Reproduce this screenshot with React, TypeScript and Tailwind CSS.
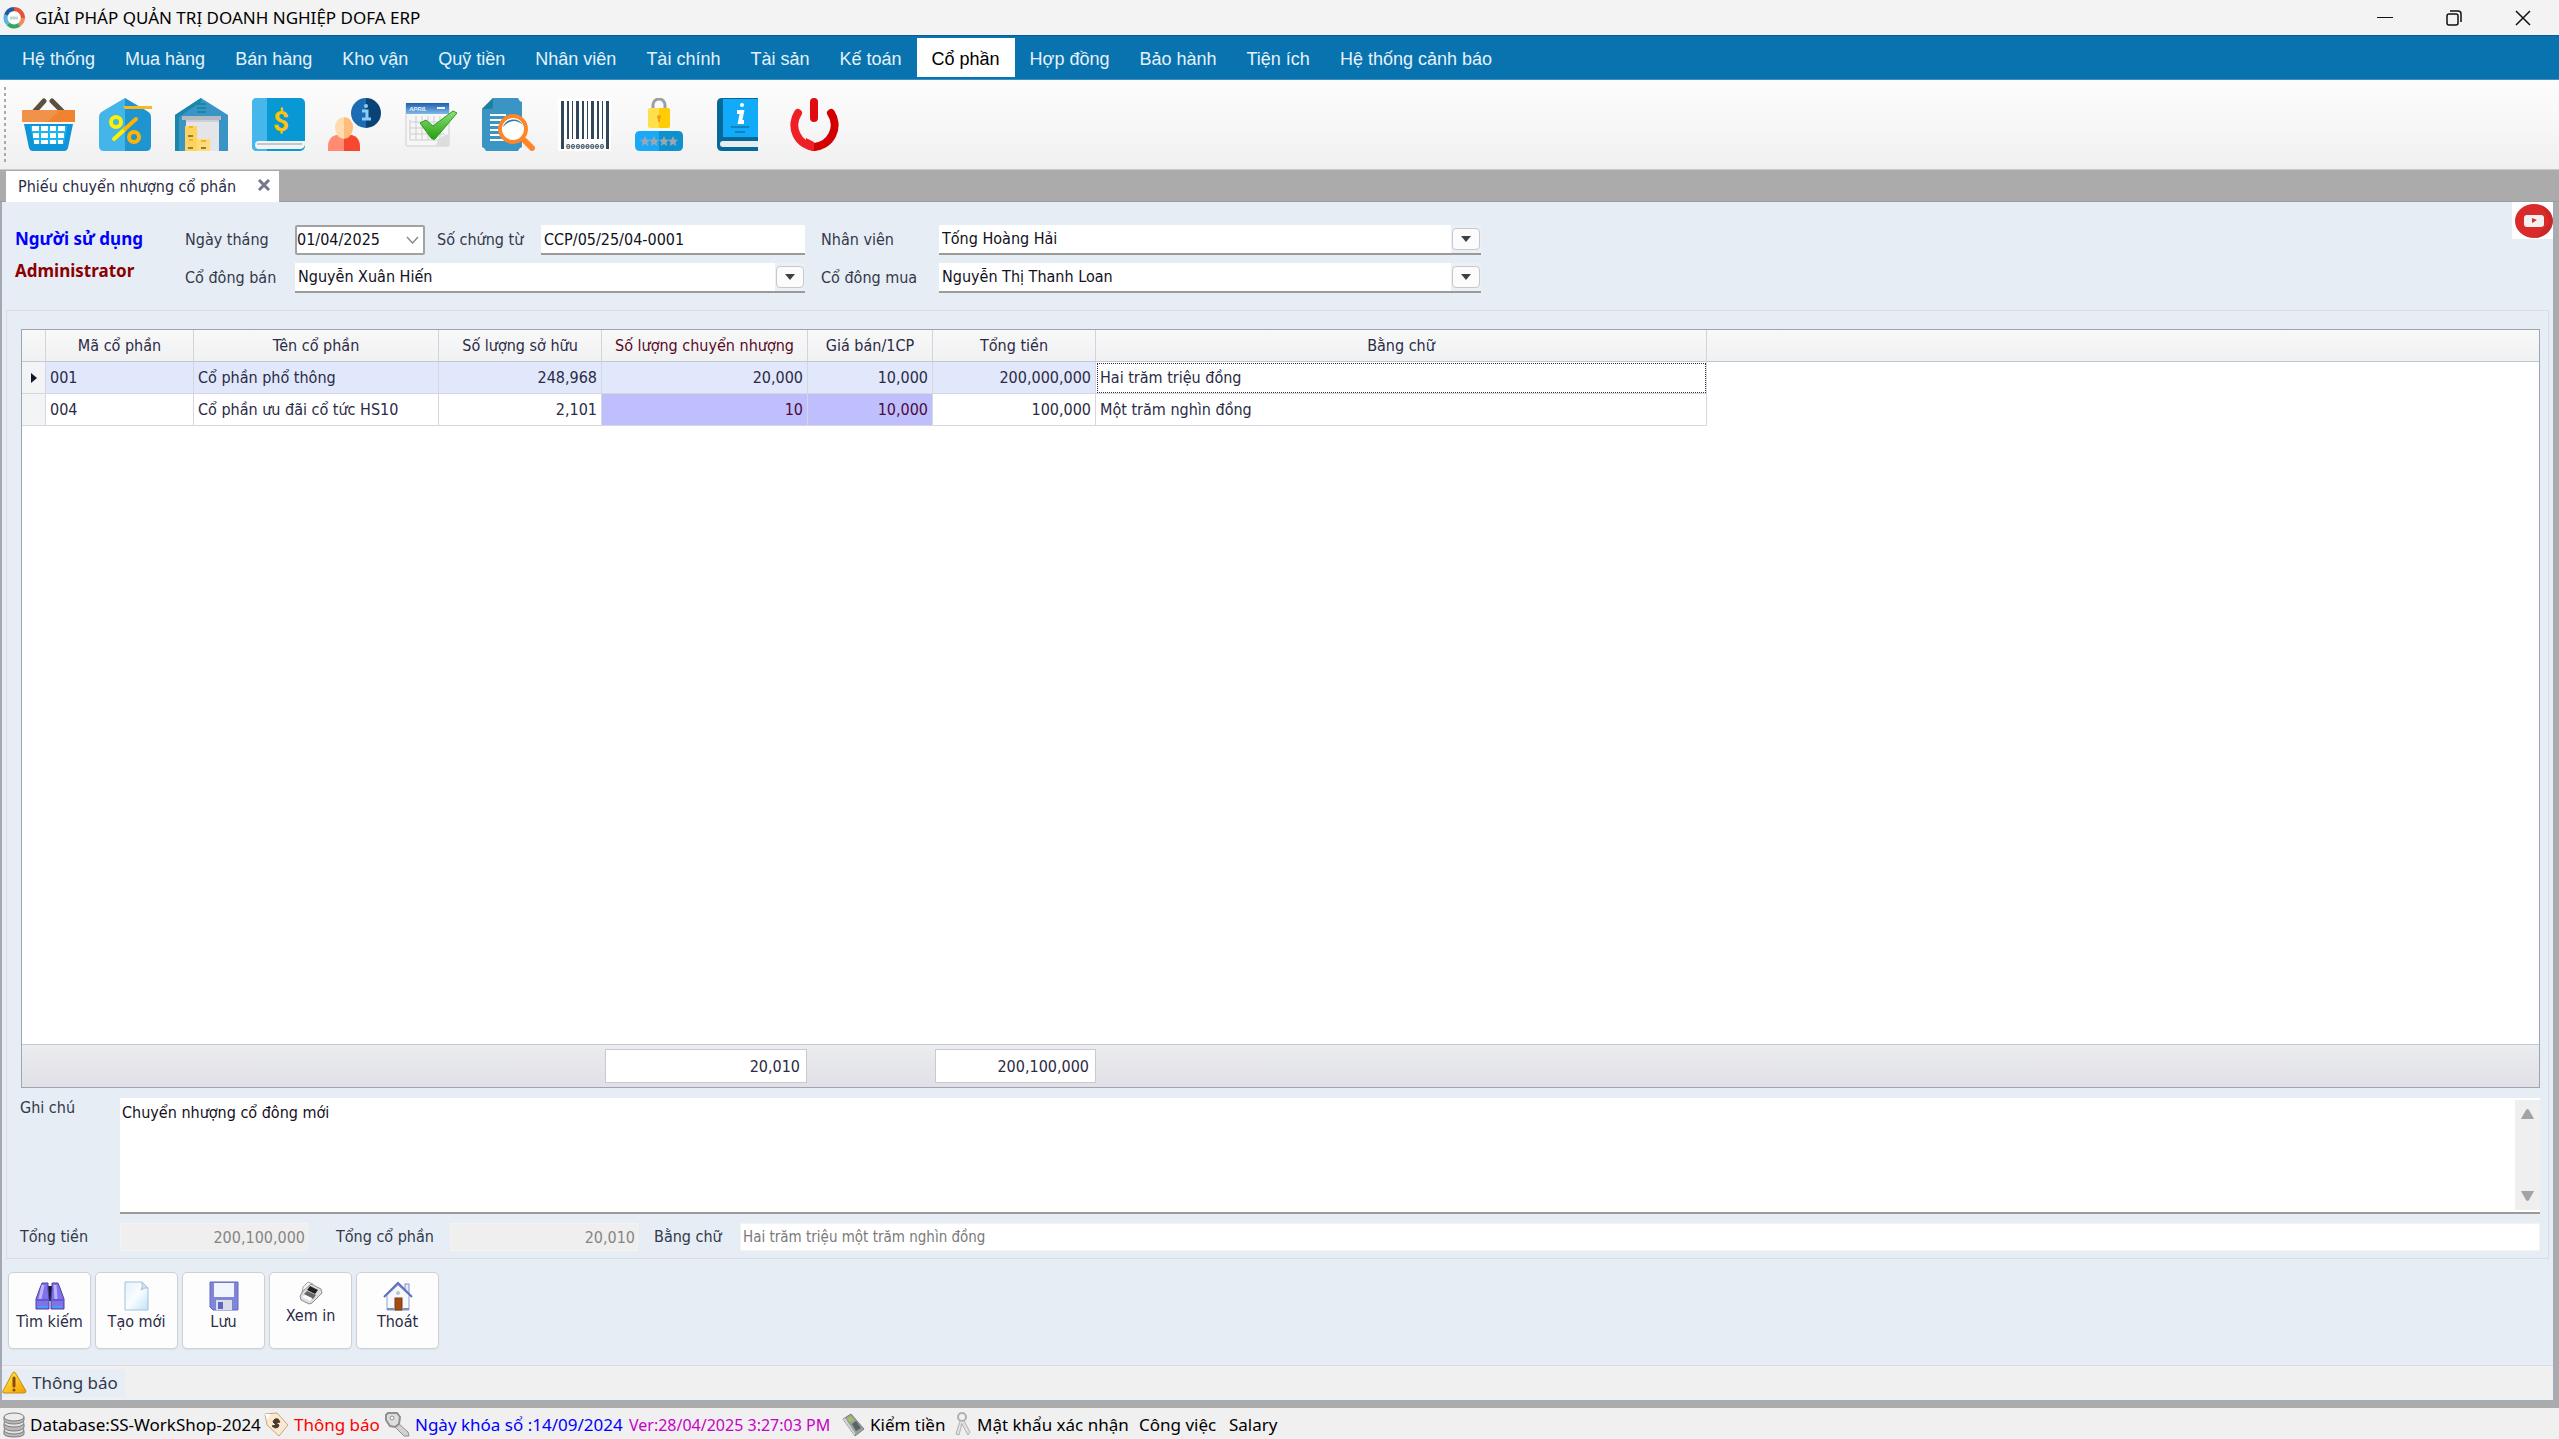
import React, { useState } from 'react';

interface ShareRow {
  code: string;
  name: string;
  owned: string;
  transfer: string;
  price: string;
  total: string;
  words: string;
}

const menuItems = [
  'Hệ thống', 'Mua hàng', 'Bán hàng', 'Kho vận', 'Quỹ tiền', 'Nhân viên', 'Tài chính',
  'Tài sản', 'Kế toán', 'Cổ phần', 'Hợp đồng', 'Bảo hành', 'Tiện ích', 'Hệ thống cảnh báo',
];

const rows: ShareRow[] = [
  {
    code: '001',
    name: 'Cổ phần phổ thông',
    owned: '248,968',
    transfer: '20,000',
    price: '10,000',
    total: '200,000,000',
    words: 'Hai trăm triệu đồng',
  },
  {
    code: '004',
    name: 'Cổ phần ưu đãi cổ tức HS10',
    owned: '2,101',
    transfer: '10',
    price: '10,000',
    total: '100,000',
    words: 'Một trăm nghìn đồng',
  },
];

/* ---------- Toolbar icons ---------- */

function BasketIcon() {
  return (
    <svg viewBox="0 0 53 53" className="h-[53px] w-[53px]">
      <path d="M22 3 L12 14 M30 3 L41 14" stroke="#5d503c" strokeWidth="5" strokeLinecap="round" fill="none" />
      <rect x="0" y="12" width="53" height="12" rx="1" fill="#f1924b" />
      <path d="M53 12 V24 H25 L38 12 Z" fill="#f0832f" />
      <path d="M2 26 H51 L46 50 Q45 53 43 53 H10 Q8 53 7 50 Z" fill="#0f95d7" />
      <path d="M8 28 H45 L42 46 H12 Z" fill="#17b7f5" />
      <g fill="#ffffff">
        <rect x="10" y="28" width="7" height="5" />
        <rect x="19" y="28" width="7" height="5" />
        <rect x="28" y="28" width="6" height="5" />
        <rect x="36" y="28" width="7" height="5" />
        <rect x="11" y="35" width="6" height="5" />
        <rect x="19" y="35" width="7" height="5" />
        <rect x="28" y="35" width="6" height="5" />
        <rect x="36" y="35" width="6" height="5" />
        <rect x="12" y="42" width="5" height="4" />
        <rect x="19" y="42" width="7" height="4" />
        <rect x="28" y="42" width="6" height="4" />
        <rect x="36" y="42" width="5" height="4" />
      </g>
    </svg>
  );
}

function DiscountIcon() {
  return (
    <svg viewBox="0 0 53 53" className="h-[53px] w-[53px]">
      <path d="M26 0 L4 13 Q0 15 0 19 V48 Q0 53 5 53 H26 Z" fill="#44b5e9" />
      <path d="M26 0 L48 13 Q52 15 52 19 V48 Q52 53 47 53 H26 Z" fill="#1e94d1" />
      <path d="M24 8 H53 V11 H26 Z" fill="#f9b91a" />
      <circle cx="17" cy="24" r="5" fill="none" stroke="#fff200" strokeWidth="4" />
      <circle cx="35" cy="39" r="5" fill="none" stroke="#ffb400" strokeWidth="4" />
      <path d="M15 41 L26 31" stroke="#fff200" strokeWidth="4" strokeLinecap="round" />
      <path d="M26 31 L37 21" stroke="#ffb400" strokeWidth="4" strokeLinecap="round" />
    </svg>
  );
}

function WarehouseIcon() {
  return (
    <svg viewBox="0 0 53 53" className="h-[53px] w-[53px]">
      <path d="M26 0 L53 17 V53 H0 V17 Z" fill="#3a95c6" />
      <path d="M0 17 L26 0 V4 L4 19 V53 H0 Z" fill="#1987a9" />
      <path d="M22 6 H31 M22 10 H31 M22 14 H31" stroke="#1987a9" strokeWidth="2" />
      <rect x="11" y="22" width="33" height="31" fill="#e3e5e8" />
      <rect x="7" y="18" width="39" height="4" fill="#b5b9c2" />
      <rect x="11" y="22" width="33" height="2" fill="#cccfd4" />
      <rect x="10" y="28" width="12" height="25" fill="#ffd45c" />
      <rect x="22" y="41" width="13" height="12" fill="#ffdc76" />
      <path d="M13 38 H18 M13 50 H18 M26 50 H31" stroke="#8d7c4f" strokeWidth="2" />
      <path d="M14 29 H18 M14 42 H18 M26 43 H31" stroke="#f2b32c" strokeWidth="2" />
    </svg>
  );
}

function MoneyBookIcon() {
  return (
    <svg viewBox="0 0 53 53" className="h-[53px] w-[53px]">
      <rect width="53" height="53" rx="5" fill="#0898d3" />
      <path d="M15 0 H5 Q0 0 0 5 V48 Q0 53 5 53 H15 Z" fill="#46b7eb" />
      <path d="M7 43 H53 V46 Q53 50 49 51 H7 Q3 51 3 47 Q3 43 7 43 Z" fill="#f2f3f4" />
      <path d="M5 46 H50" stroke="#c3c7cb" strokeWidth="2" />
      <text x="29" y="33" textAnchor="middle" fontFamily="Roboto, sans-serif" fontSize="28" fontWeight="700" fill="#fdc30c">$</text>
    </svg>
  );
}

function UserInfoIcon() {
  return (
    <svg viewBox="0 0 53 53" className="h-[53px] w-[53px]">
      <path d="M16 37 H8 Q0 39 0 49 V53 H16 Z" fill="#ff8c72" />
      <path d="M16 37 H24 Q32 39 32 49 V53 H16 Z" fill="#f5482e" />
      <path d="M16 19 Q7 20 7 30 Q8 40 16 41 Z" fill="#ffdcae" />
      <path d="M16 19 Q25 20 25 30 Q24 40 16 41 Z" fill="#ffbc7c" />
      <path d="M38 0 A15 15 0 0 0 38 30 Z" fill="#1b6cb3" />
      <path d="M38 0 A15 15 0 0 1 38 30 Z" fill="#0a4376" />
      <circle cx="38" cy="8" r="2" fill="#8ccdf7" />
      <path d="M34 13 H39 V21 M34 21 H43" stroke="#8ccdf7" strokeWidth="3" fill="none" />
    </svg>
  );
}

function CalendarCheckIcon() {
  return (
    <svg viewBox="0 0 53 53" className="h-[53px] w-[53px]">
      <defs>
        <linearGradient id="calHead" x1="0" x2="0" y1="0" y2="1">
          <stop offset="0" stopColor="#1f5fae" />
          <stop offset="1" stopColor="#7fb8ea" />
        </linearGradient>
        <linearGradient id="calCheck" x1="0" x2="0" y1="0" y2="1">
          <stop offset="0" stopColor="#8fe07c" />
          <stop offset="1" stopColor="#23a00d" />
        </linearGradient>
      </defs>
      <rect x="1" y="6" width="43" height="42" rx="1" fill="#f6f6f6" stroke="#cfcfcf" />
      <rect x="1" y="5" width="43" height="11" fill="url(#calHead)" />
      <text x="4" y="13" fontFamily="Liberation Sans, sans-serif" fontSize="6" fontWeight="700" fontStyle="italic" fill="#e8f2fc">APRIL</text>
      <path d="M32 10 H40" stroke="#e8f2fc" strokeWidth="2" />
      <path d="M5 24 H40 M5 30 H40 M5 36 H40 M5 42 H40 M5 22 V42 M11 18 V42 M17 18 V42 M23 18 V42 M29 18 V42 M35 18 V42" stroke="#cdcdcd" />
      <path d="M31 48 Q33 38 44 36 V48 Z" fill="#dddddd" />
      <path d="M15 25 L21 22 L28 28 L48 13 L52 15 L30 41 Q28 42 26 40 Z" fill="url(#calCheck)" stroke="#2f9a1c" />
    </svg>
  );
}

function DocSearchIcon() {
  return (
    <svg viewBox="0 0 53 53" className="h-[53px] w-[53px]">
      <path d="M11 0 H36 Q37 3 40 4 V49 Q37 50 36 53 H4 Q3 50 0 49 V11 Z" fill="#3a95c4" />
      <path d="M11 0 V8 Q11 11 8 11 H0 Z" fill="#1c7f9f" />
      <path d="M8 17 H24 M8 22 H20 M8 27 H18 M8 32 H18 M8 37 H20 M8 42 H25" stroke="#ffffff" strokeWidth="2" />
      <path d="M43 43 L50 50" stroke="#ff8628" strokeWidth="6" strokeLinecap="round" />
      <circle cx="31" cy="31" r="13" fill="#ffffff" stroke="#ff8628" strokeWidth="4" />
      <path d="M21 29 A11 11 0 0 1 41 27 Q31 18 21 29" fill="#2f7f9f" />
    </svg>
  );
}

function BarcodeIcon() {
  return (
    <svg viewBox="0 0 53 53" className="h-[53px] w-[53px]">
      <rect width="53" height="53" fill="#ffffff" />
      <g fill="#33475b">
        <rect x="3" y="3" width="3" height="48" />
        <rect x="9" y="3" width="2" height="38" />
        <rect x="14" y="3" width="1" height="38" />
        <rect x="18" y="3" width="3" height="38" />
        <rect x="24" y="3" width="2" height="38" />
        <rect x="29" y="3" width="1" height="38" />
        <rect x="33" y="3" width="3" height="38" />
        <rect x="39" y="3" width="2" height="38" />
        <rect x="44" y="3" width="1" height="38" />
        <rect x="48" y="3" width="3" height="48" />
      </g>
      <text x="27" y="51" textAnchor="middle" fontFamily="Liberation Mono, monospace" fontSize="8" fontWeight="700" fill="#33475b">00000000</text>
    </svg>
  );
}

function PasswordIcon() {
  return (
    <svg viewBox="0 0 53 53" className="h-[53px] w-[53px]">
      <path d="M18 12 V7 A6 6 0 0 1 30 7 V12" fill="none" stroke="#9b9fa3" strokeWidth="3" />
      <path d="M24 10 H15 Q13 10 13 12 V28 Q13 30 15 30 H24 Z" fill="#ffe04b" />
      <path d="M24 10 H33 Q35 10 35 12 V28 Q35 30 33 30 H24 Z" fill="#ffcd05" />
      <circle cx="24" cy="19" r="2" fill="#f59a1c" />
      <path d="M24 19 V24" stroke="#f59a1c" strokeWidth="2" />
      <path d="M24 33 H5 Q0 33 0 38 V48 Q0 53 5 53 H24 Z" fill="#19a9f7" />
      <path d="M24 33 H43 Q48 33 48 38 V48 Q48 53 43 53 H24 Z" fill="#0f91cd" />
      <g fill="#9aa7b3">
        {[10, 19, 29, 38].map((x) => (
          <path key={x} transform={`translate(${x} 43)`} d="M0 -5 L1.5 -1.6 L5 -1.2 L2.4 1.2 L3.2 5 L0 3 L-3.2 5 L-2.4 1.2 L-5 -1.2 L-1.5 -1.6 Z" />
        ))}
      </g>
    </svg>
  );
}

function GuideBookIcon() {
  return (
    <svg viewBox="0 0 53 53" className="h-[53px] w-[53px]">
      <path d="M11 0 H47 V53 H11 Q6 53 6 48 V5 Q6 0 11 0 Z" fill="#05699a" />
      <path d="M12 1 H47 V39 H12 Z" fill="#12abf9" />
      <path d="M12 43 H47 V49 H12 Q9 49 9 46 Q9 43 12 43 Z" fill="#e9ecee" />
      <circle cx="31" cy="7" r="2" fill="#ffffff" />
      <path d="M26 14 H31 L29 24 H33" fill="none" stroke="#ffffff" strokeWidth="4" />
      <path d="M20 29 H38 M24 34 H34" stroke="#1283bd" strokeWidth="2" />
    </svg>
  );
}

function PowerIcon() {
  return (
    <svg viewBox="0 0 53 53" className="h-[53px] w-[53px]">
      <path d="M10 15 A22 22 0 0 0 26 49" fill="none" stroke="#ef1f26" strokeWidth="8" strokeLinecap="round" />
      <path d="M43 15 A22 22 0 0 1 26 49" fill="none" stroke="#d30000" strokeWidth="8" strokeLinecap="round" />
      <path d="M18 40 L26 44 V53 L17 50 Z" fill="#ef1f26" />
      <path d="M26 4 V20" stroke="#e00b10" strokeWidth="8" strokeLinecap="round" />
    </svg>
  );
}

const tools = [
  { label: 'Mua hàng', icon: BasketIcon },
  { label: 'Bán hàng', icon: DiscountIcon },
  { label: 'Kho vận', icon: WarehouseIcon },
  { label: 'Quỹ tiền', icon: MoneyBookIcon },
  { label: 'Nhân viên', icon: UserInfoIcon },
  { label: 'Lịch', icon: CalendarCheckIcon },
  { label: 'Tra cứu', icon: DocSearchIcon },
  { label: 'Mã vạch', icon: BarcodeIcon },
  { label: 'Mật khẩu', icon: PasswordIcon },
  { label: 'Hướng dẫn', icon: GuideBookIcon },
  { label: 'Thoát', icon: PowerIcon },
];

/* ---------- Action button icons ---------- */

function BinocularsIcon() {
  return (
    <svg viewBox="0 0 30 30" className="h-[30px] w-[30px]">
      <rect x="11" y="5" width="8" height="15" fill="#1c1c2c" />
      <path d="M7 2 H13 V8 L14 18 V28 H1 V18 L5 7 Z" fill="#7f72ea" stroke="#4a3fa8" />
      <path d="M17 2 H23 L25 7 L29 18 V28 H16 V18 L17 8 Z" fill="#7f72ea" stroke="#4a3fa8" />
      <path d="M8 4 L5 18 M20 4 L21 18" stroke="#bdb4ff" strokeWidth="3" />
      <path d="M2 19 H13 M17 19 H28" stroke="#4a3fa8" />
      <path d="M3 26 H12 M18 26 H27" stroke="#3fa4ee" strokeWidth="2" />
    </svg>
  );
}

function NewFileIcon() {
  return (
    <svg viewBox="0 0 30 30" className="h-[30px] w-[30px]">
      <defs>
        <linearGradient id="newFile" x1="0" x2="1" y1="0" y2="1">
          <stop offset="0" stopColor="#e3f1fb" />
          <stop offset="0.5" stopColor="#fafdff" />
          <stop offset="1" stopColor="#bfe3f8" />
        </linearGradient>
      </defs>
      <path d="M3 1 H20 L26 7 V29 H3 Z" fill="url(#newFile)" stroke="#a3c0de" />
      <path d="M20 1 Q21 7 19 9 Q23 6 26 7 Z" fill="#cfe2f2" stroke="#a3c0de" />
    </svg>
  );
}

function FloppyIcon() {
  return (
    <svg viewBox="0 0 30 30" className="h-[30px] w-[30px]">
      <path d="M1 1 H29 V29 H4 L1 26 Z" fill="#8085dc" stroke="#6368bd" />
      <rect x="5" y="2" width="20" height="14" fill="#f1f5fd" />
      <rect x="7" y="19" width="16" height="10" fill="#dcdde4" />
      <rect x="9" y="21" width="5" height="7" fill="#5f65c2" />
    </svg>
  );
}

function PrinterIcon() {
  return (
    <svg viewBox="0 0 24 24" className="h-6 w-6">
      <path d="M4 6 L9 1 L14 3 L11 8 L3 12 Z" fill="#f4f4f4" stroke="#a2a2a2" />
      <path d="M1 15 L4 10 L12 3 L22 8 L23 12 L13 22 L10 23 L2 19 Z" fill="#dedede" stroke="#8d8d8d" />
      <path d="M8 9 L11 5 L19 9 L16 13 Z" fill="#222222" />
      <path d="M5 13 L8 10 L17 14 L14 18 Z" fill="#666666" />
      <path d="M3 16 L6 14 L13 17 L11 20 Z" fill="#ffffff" />
    </svg>
  );
}

function HomeIcon() {
  return (
    <svg viewBox="0 0 30 30" className="h-[30px] w-[30px]">
      <rect x="22" y="3" width="4" height="9" fill="#e6ebf7" stroke="#7f90cc" />
      <path d="M4 14 L15 4 L26 14 V29 H4 Z" fill="#f6f8fc" stroke="#92a2c8" />
      <path d="M1 16 L15 2 L29 16" fill="none" stroke="#5b70bc" strokeWidth="2" />
      <circle cx="15" cy="12" r="2" fill="#b9c3d3" />
      <rect x="12" y="17" width="7" height="12" fill="#a24c14" stroke="#7d3a10" />
      <path d="M4 28 H11 M20 28 H26" stroke="#7d8fc0" strokeWidth="2" />
    </svg>
  );
}

const actions = [
  { label: 'Tìm kiếm', icon: BinocularsIcon },
  { label: 'Tạo mới', icon: NewFileIcon },
  { label: 'Lưu', icon: FloppyIcon },
  { label: 'Xem in', icon: PrinterIcon },
  { label: 'Thoát', icon: HomeIcon },
];

/* ---------- Status bar icons ---------- */

function DatabaseIcon() {
  return (
    <svg viewBox="0 0 22 26" className="h-[26px] w-[22px]">
      <g stroke="#7c7c7c">
        <path d="M1 19 V22 A10 3 0 0 0 21 22 V19 Z" fill="#b9b9b9" />
        <ellipse cx="11" cy="18" rx="10" ry="4" fill="#e4e4e4" />
        <path d="M1 12 V15 A10 4 0 0 0 21 15 V12 Z" fill="#b9b9b9" />
        <ellipse cx="11" cy="11" rx="10" ry="4" fill="#e4e4e4" />
        <path d="M1 5 V8 A10 4 0 0 0 21 8 V5 Z" fill="#b9b9b9" />
        <ellipse cx="11" cy="5" rx="10" ry="4" fill="#ececec" />
      </g>
    </svg>
  );
}

function TagIcon() {
  return (
    <svg viewBox="0 0 25 25" className="h-[25px] w-[25px]">
      <path d="M1 2 L13 1 L24 13 L15 24 L3 13 Z" fill="#fbe8d0" stroke="#c9a67c" />
      <path d="M1 2 L7 2 L3 8 Z" fill="#ffffff" />
      <path d="M9 10 Q10 6 14 7 L16 10 L12 11 L15 13 Q15 16 11 16 L8 14 L12 13 Z" fill="#4a3a2c" stroke="#4a3a2c" />
    </svg>
  );
}

function KeyIcon() {
  return (
    <svg viewBox="0 0 25 25" className="h-[25px] w-[25px]">
      <path d="M13 11 L23 20 L24 24 L19 24 L10 15 Z" fill="#d2d2d2" stroke="#8f8f8f" />
      <path d="M3 1 H12 L15 5 L14 12 L10 15 L5 14 L1 8 V3 Z" fill="#dedede" stroke="#8f8f8f" strokeWidth="2" />
      <circle cx="7" cy="6" r="2" fill="#f7f7f7" stroke="#8f8f8f" />
    </svg>
  );
}

function CounterIcon() {
  return (
    <svg viewBox="0 0 23 24" className="h-6 w-[23px]">
      <path d="M1 6 L9 1 L22 16 L13 23 Z" fill="#9a9e9d" stroke="#7c807f" />
      <path d="M1 6 L13 23 L13 20 L3 5 Z" fill="#d5d7d6" />
      <path d="M5 6 L9 3 L12 7 L8 9 Z" fill="#9fc45a" />
      <path d="M10 11 L14 8 L19 15 L14 18 Z" fill="#586468" />
    </svg>
  );
}

function KeysIcon() {
  return (
    <svg viewBox="0 0 18 25" className="h-[25px] w-[18px]">
      <circle cx="8" cy="5" r="4" fill="none" stroke="#b0b0b0" strokeWidth="2" />
      <path d="M6 9 L2 22 L5 23 L8 11 M10 9 L16 20 L14 23 L8 12" fill="#e3e3e3" stroke="#b0b0b0" />
    </svg>
  );
}

function WarningIcon() {
  return (
    <svg viewBox="0 0 25 24" className="h-6 w-[25px]">
      <defs>
        <linearGradient id="warn" x1="0" x2="1" y1="0" y2="1">
          <stop offset="0" stopColor="#fff04a" />
          <stop offset="1" stopColor="#f59b00" />
        </linearGradient>
      </defs>
      <path d="M12 1 Q13 1 14 3 L24 20 Q24 22 22 22 H2 Q0 22 1 20 L10 3 Q11 1 12 1 Z" fill="url(#warn)" stroke="#c98a10" />
      <path d="M12 7 V15" stroke="#8c4a06" strokeWidth="3" strokeLinecap="round" />
      <circle cx="12" cy="19" r="1.5" fill="#8c4a06" />
    </svg>
  );
}

const statusItems = [
  { label: 'Database:SS-WorkShop-2024', icon: DatabaseIcon, className: 'w-[261px] text-[17px] text-black' },
  { label: 'Thông báo', icon: TagIcon, className: 'w-[121px] text-[17px] text-[#ff0000]' },
  { label: 'Ngày khóa sổ :14/09/2024', icon: KeyIcon, className: 'w-[244px] text-[17px] text-[#0000ff]' },
  { label: 'Ver:28/04/2025 3:27:03 PM', icon: null, className: 'w-[213px] text-base text-[#c800c8]' },
  { label: 'Kiểm tiền', icon: CounterIcon, className: 'w-[112px] text-[17px] text-black' },
  { label: 'Mật khẩu xác nhận', icon: KeysIcon, className: 'w-[185px] text-[17px] text-black' },
  { label: 'Công việc', icon: null, className: 'w-[90px] text-[17px] text-black' },
  { label: 'Salary', icon: null, className: 'text-[17px] text-black' },
];

/* ---------- Form parts ---------- */

function LookupField({ id, label, value, labelWidth }: { id: string; label: string; value: string; labelWidth: string }) {
  return (
    <div className="flex items-center">
      <label htmlFor={id} className={`${labelWidth} shrink-0`}>{label}</label>
      <div className="relative flex-1 border-b-2 border-[#9a9a98] bg-white">
        <select id={id} defaultValue={value} className="block h-7 w-full appearance-none bg-white px-[3px] text-[#111122] outline-none">
          <option>{value}</option>
        </select>
        <span className="pointer-events-none absolute inset-y-0 right-0 flex w-[30px] items-center justify-center bg-[#eaf0f5]">
          <span className="flex h-[22px] w-7 items-center justify-center rounded-[4px] border border-[#c8c8cc] bg-[#fbfbfb]">
            <svg viewBox="0 0 10 6" className="h-[6px] w-[10px]"><path d="M0 0 H10 L5 6 Z" fill="#3f3f3f" /></svg>
          </span>
        </span>
      </div>
    </div>
  );
}

function ShareTable() {
  const head = 'border-r border-b border-r-[#d3d4db] border-b-[#c3c5cf] font-normal';
  const cell = 'border-r border-b border-[#d5d6de] px-1';

  return (
    <div className="flex flex-1 flex-col border border-[#9ea4b2] bg-white">
      <div className="bg-linear-to-b from-[#f8f8f8] to-[#f0f1f3] bg-[length:100%_32px] bg-no-repeat">
        <table className="w-full table-fixed border-separate border-spacing-0 text-[#2b2b45]">
          <colgroup>
            <col className="w-[24px]" />
            <col className="w-[148px]" />
            <col className="w-[245px]" />
            <col className="w-[163px]" />
            <col className="w-[206px]" />
            <col className="w-[125px]" />
            <col className="w-[163px]" />
            <col className="w-[611px]" />
            <col />
          </colgroup>
          <thead>
            <tr className="h-8">
              <th className={head} aria-label="Dòng" />
              <th className={head}>Mã cổ phần</th>
              <th className={head}>Tên cổ phần</th>
              <th className={head}>Số lượng sở hữu</th>
              <th className={`${head} text-[#5a0a1e]`}>Số lượng chuyển nhượng</th>
              <th className={head}>Giá bán/1CP</th>
              <th className={head}>Tổng tiền</th>
              <th className={head}>Bằng chữ</th>
              <td className="border-b border-[#c3c5cf]" />
            </tr>
          </thead>
          <tbody>
            {rows.map((row, i) => {
              const active = i === 0;
              const base = active ? 'bg-[#e1e8fc]' : 'bg-white';
              const edit = active ? 'bg-[#e1e8fc]' : 'bg-[#c0bffd] text-[#4a0a3c]';
              return (
                <tr key={row.code} className="h-8">
                  <td className="border-r border-b border-[#d5d6de] bg-[#f3f4f6]">
                    {active && (
                      <svg viewBox="0 0 6 10" className="ml-[9px] h-[10px] w-[6px]"><path d="M0 0 L6 5 L0 10 Z" fill="#15152a" /></svg>
                    )}
                  </td>
                  <td className={`${cell} ${base}`}>{row.code}</td>
                  <td className={`${cell} ${base}`}>{row.name}</td>
                  <td className={`${cell} ${base} text-right`}>{row.owned}</td>
                  <td className={`${cell} ${edit} text-right`}>{row.transfer}</td>
                  <td className={`${cell} ${edit} text-right`}>{row.price}</td>
                  <td className={`${cell} ${base} text-right`}>{row.total}</td>
                  <td className={`${cell} bg-white ${active ? 'outline-1 -outline-offset-2 outline-dotted outline-[#30303c]' : ''}`}>{row.words}</td>
                  <td className="bg-white" />
                </tr>
              );
            })}
          </tbody>
        </table>
      </div>

      <div className="flex-1" />

      {/* Column totals */}
      <div className="flex h-[43px] items-center border-t border-[#c6c8cf] bg-linear-to-b from-[#ebecef] to-[#e0e0e6] text-[#2b2b45]">
        <output className="ml-[583px] flex h-[34px] w-[202px] items-center justify-end border border-[#c9cad1] bg-white px-[6px] pt-0.5">20,010</output>
        <output className="ml-32 flex h-[34px] w-[161px] items-center justify-end border border-[#c9cad1] bg-white px-[6px] pt-0.5">200,100,000</output>
      </div>
    </div>
  );
}

export default function App() {
  const [activeMenu, setActiveMenu] = useState('Cổ phần');
  const [note, setNote] = useState('Chuyển nhượng cổ đông mới');

  return (
    <div className="flex min-h-screen flex-col overflow-hidden bg-[#ababab] font-['DejaVu_Sans_Condensed','DejaVu_Sans',sans-serif] text-base leading-5 text-[#33384a]">
      {/* Title bar */}
      <header className="flex h-[35px] items-center bg-[#f3f3f3] pr-0.5 pl-[3px] font-['Noto_Sans',sans-serif] text-[17px] text-black">
        <svg viewBox="0 0 22 24" className="h-6 w-[22px]">
          <g fill="none" strokeWidth="4">
            <path d="M11 3 A9 9 0 0 1 20 12" stroke="#e8503a" />
            <path d="M20 12 A9 9 0 0 1 16 19" stroke="#f08a5c" />
            <path d="M16 19 A9 9 0 0 1 5 18" stroke="#2fa866" />
            <path d="M5 18 A9 9 0 0 1 3 9" stroke="#58b4e4" />
            <path d="M3 9 A9 9 0 0 1 11 3" stroke="#1d5d9c" />
          </g>
          <circle cx="11" cy="12" r="6" fill="#ffffff" />
          <path d="M7 12 H15" stroke="#c3d6cc" strokeWidth="3" />
        </svg>
        <h1 className="ml-[10px] flex-1">GIẢI PHÁP QUẢN TRỊ DOANH NGHIỆP DOFA ERP</h1>
        <button type="button" aria-label="Thu nhỏ" className="flex h-full w-[69px] items-center justify-center">
          <svg viewBox="0 0 16 16" className="h-4 w-4"><path d="M0 7.5 H16" stroke="#111" /></svg>
        </button>
        <button type="button" aria-label="Khôi phục" className="flex h-full w-[69px] items-center justify-center">
          <svg viewBox="0 0 16 16" className="h-4 w-4" fill="none" stroke="#111" strokeWidth="1.5">
            <rect x="1" y="4" width="11" height="11" rx="2" />
            <path d="M4 1 H12 Q15 1 15 4 V12" />
          </svg>
        </button>
        <button type="button" aria-label="Đóng" className="flex h-full w-[69px] items-center justify-center">
          <svg viewBox="0 0 16 16" className="h-4 w-4"><path d="M1 1 L15 15 M15 1 L1 15" stroke="#111" strokeWidth="1.5" /></svg>
        </button>
      </header>

      {/* Main menu */}
      <nav className="flex h-[45px] items-center border-t border-b border-t-[#075e90] border-b-[#3b93c4] bg-[#0873af] pl-[7px] font-['Liberation_Sans',sans-serif] text-lg">
        {menuItems.map((item) => (
          <button
            key={item}
            type="button"
            onClick={() => setActiveMenu(item)}
            className={`h-[39px] px-[15px] pt-0.5 whitespace-nowrap ${item === activeMenu ? 'bg-white text-black' : 'text-[#e6f1f8]'}`}
          >
            {item}
          </button>
        ))}
      </nav>

      {/* Toolbar */}
      <div className="flex h-[90px] items-center border-b border-[#c9c9c9] bg-linear-to-b from-[#fdfdfd] via-[#f7f7f7] to-[#f0f0f0] pl-1">
        <svg viewBox="0 0 2 76" className="h-[76px] w-[2px] shrink-0"><path d="M1 0 V76" stroke="#a9a9a9" strokeWidth="2" strokeDasharray="3 3" /></svg>
        <div className="ml-4 flex w-[819px] justify-between">
          {tools.map(({ label, icon: Icon }) => (
            <button key={label} type="button" aria-label={label} title={label}>
              <Icon />
            </button>
          ))}
        </div>
      </div>

      {/* Document tabs */}
      <div className="flex h-8 items-end border-b border-[#9a9ca8] bg-[#ababab] pl-[6px]">
        <div className="-mb-px flex h-[31px] w-[273px] items-center justify-between bg-white pr-2 pl-3 text-[#2b2b45]">
          <span className="whitespace-nowrap">Phiếu chuyển nhượng cổ phần</span>
          <button type="button" aria-label="Đóng tab" className="pb-1">
            <svg viewBox="0 0 14 12" className="h-3 w-[14px]"><path d="M2 1 L12 11 M12 1 L2 11" stroke="#74788a" strokeWidth="3" /></svg>
          </button>
        </div>
      </div>

      {/* Document */}
      <main className="mr-1 mb-[7px] flex flex-1 flex-col border-r-2 border-b border-l-2 border-r-[#a3abba] border-b-[#a0b0c4] border-l-[#a5a8b2] bg-[#e6edf4]">
        <form className="relative flex h-[108px] items-start" onSubmit={(e) => e.preventDefault()}>
          <div className="w-[183px] pt-[27px] pl-[13px] font-['Noto_Sans',sans-serif] text-[17px] font-bold">
            <div className="text-[#0000ff]">Người sử dụng</div>
            <div className="mt-3 text-[#8b0000]">Administrator</div>
          </div>

          <div className="flex w-[620px] flex-col gap-2 pt-[23px]">
            <div className="flex items-center">
              <label htmlFor="date" className="w-[110px] shrink-0">Ngày tháng</label>
              <div className="flex h-[30px] w-[130px] shrink-0 items-center rounded-[2px] border-2 border-[#a2a2a2] bg-white pr-1">
                <input id="date" defaultValue="01/04/2025" className="w-0 flex-1 text-[#111122] outline-none" />
                <button type="button" aria-label="Chọn ngày">
                  <svg viewBox="0 0 13 8" className="h-2 w-[13px]"><path d="M1 1 L6.5 7 L12 1" fill="none" stroke="#8b8b8b" strokeWidth="1.5" /></svg>
                </button>
              </div>
              <label htmlFor="docNo" className="ml-3 w-[104px] shrink-0">Số chứng từ</label>
              <input id="docNo" defaultValue="CCP/05/25/04-0001" className="h-[30px] w-0 flex-1 border-b-2 border-[#9a9a98] bg-white px-[3px] text-[#111122] outline-none" />
            </div>
            <LookupField id="seller" label="Cổ đông bán" value="Nguyễn Xuân Hiến" labelWidth="w-[110px]" />
          </div>

          <div className="ml-4 flex w-[660px] flex-col gap-2 pt-[23px]">
            <LookupField id="staff" label="Nhân viên" value="Tống Hoàng Hải" labelWidth="w-[118px]" />
            <LookupField id="buyer" label="Cổ đông mua" value="Nguyễn Thị Thanh Loan" labelWidth="w-[118px]" />
          </div>

          <a href="#video" aria-label="Video hướng dẫn" className="ml-auto block bg-white">
            <svg viewBox="0 0 41 37" className="h-[37px] w-[41px]">
              <ellipse cx="22" cy="19" rx="19" ry="17" fill="#d92b2b" />
              <path d="M30 4 A19 17 0 0 1 24 36 L38 20 Z" fill="#c92828" />
              <rect x="12" y="13" width="20" height="12" rx="3" fill="#f1f1f1" />
              <path d="M20 16 L25 18 L20 21 Z" fill="#d92b2b" />
            </svg>
          </a>
        </form>

        {/* Transfer details */}
        <section className="mx-1 flex flex-1 flex-col border border-[#d9dde1] pt-[18px] pr-2 pl-[14px]">
          <ShareTable />

          <div className="mt-[10px] flex items-start">
            <label htmlFor="note" className="-ml-px w-[100px] shrink-0">Ghi chú</label>
            <div className="flex h-[116px] flex-1 border-b-2 border-[#9a9a98] bg-white">
              <textarea
                id="note"
                value={note}
                onChange={(e) => setNote(e.target.value)}
                className="flex-1 resize-none overflow-hidden px-[2px] pt-[5px] text-[#111122] outline-none"
              />
              <div className="my-[2px] flex w-[25px] flex-col items-center justify-between bg-[#efefef] py-[9px]">
                <button type="button" aria-label="Cuộn lên" className="flex">
                  <svg viewBox="0 0 13 10" className="h-[10px] w-[13px]"><path d="M0 10 L1 8 L5 1 Q6.5 -1 8 1 L12 8 L13 10 Z" fill="#a3a3a3" /></svg>
                </button>
                <button type="button" aria-label="Cuộn xuống" className="flex">
                  <svg viewBox="0 0 13 10" className="h-[10px] w-[13px]"><path d="M0 0 L1 2 L5 9 Q6.5 11 8 9 L12 2 L13 0 Z" fill="#a3a3a3" /></svg>
                </button>
              </div>
            </div>
          </div>

          <div className="mt-[9px] mb-[7px] flex items-center">
            <label htmlFor="sumMoney" className="-ml-px w-[100px] shrink-0">Tổng tiền</label>
            <input id="sumMoney" readOnly value="200,100,000" className="h-7 w-[188px] border border-[#f6f2ee] bg-[#efefef] px-[2px] text-right text-[#858585] outline-none" />
            <label htmlFor="sumShares" className="ml-7 w-[114px] shrink-0">Tổng cổ phần</label>
            <input id="sumShares" readOnly value="20,010" className="h-7 w-[188px] border border-[#f6f2ee] bg-[#efefef] px-[2px] text-right text-[#858585] outline-none" />
            <label htmlFor="sumWords" className="ml-4 w-[86px] shrink-0">Bằng chữ</label>
            <input id="sumWords" readOnly value="Hai trăm triệu một trăm nghìn đồng" className="h-7 flex-1 border border-[#f6f2ee] bg-white px-[2px] text-[15px] text-[#7a7a7a] outline-none" />
          </div>
        </section>

        {/* Actions */}
        <div className="mt-[13px] mb-4 ml-[6px] flex gap-1">
          {actions.map(({ label, icon: Icon }) => (
            <button
              key={label}
              type="button"
              className="flex h-[77px] w-[83px] flex-col items-center gap-px rounded-[5px] border border-[#cfd0d4] bg-[#fdfdfd] pt-2 shadow-xs whitespace-nowrap text-[#2b2b45]"
            >
              <Icon />
              <span>{label}</span>
            </button>
          ))}
        </div>

        <div className="flex h-[35px] items-center border-t border-[#d9dde1] bg-[#f0f0f0]">
          <div className="flex h-7 w-[123px] items-center gap-[5px] bg-[#e6edf4] font-['Noto_Sans',sans-serif] text-[17px]">
            <WarningIcon />
            <span>Thông báo</span>
          </div>
        </div>
      </main>

      {/* Status bar */}
      <footer className="flex h-[31px] items-center bg-[#f0f0f0] pt-0.5 pl-[3px] font-['Noto_Sans',sans-serif]">
        {statusItems.map(({ label, icon: Icon, className }) => (
          <div key={label} className={`flex items-center gap-[5px] whitespace-nowrap ${className}`}>
            {Icon && <Icon />}
            <span>{label}</span>
          </div>
        ))}
      </footer>
    </div>
  );
}
